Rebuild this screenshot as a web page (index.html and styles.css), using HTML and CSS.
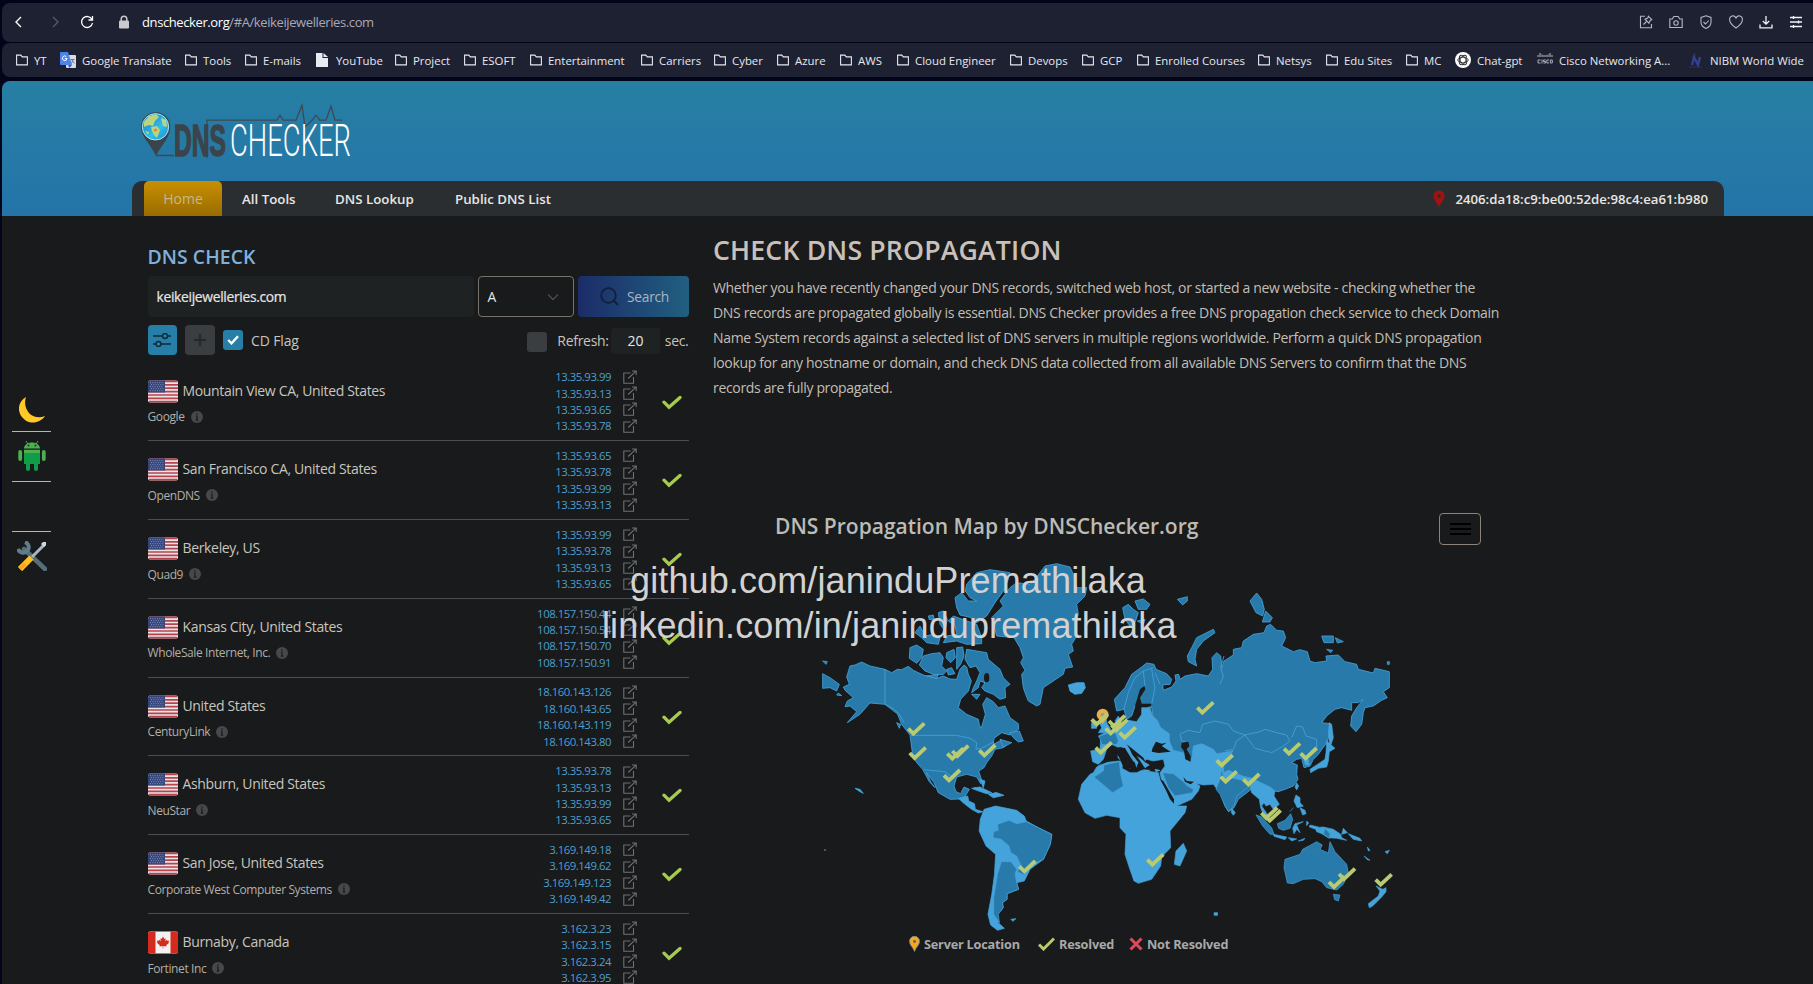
FILE: index.html
```html
<!DOCTYPE html>
<html lang="en">
<head>
<meta charset="utf-8">
<title>DNS Checker</title>
<link rel="stylesheet" href="styles.css">
</head>
<body>
<svg class="defs" width="0" height="0" aria-hidden="true">
  <defs>
    <linearGradient id="sky" x1="0" y1="0" x2="1" y2="1"><stop offset="0" stop-color="#1674b8"/><stop offset=".6" stop-color="#2ec0ee"/><stop offset="1" stop-color="#1b86c9"/></linearGradient>
    <symbol id="folder" viewBox="0 0 12 12"><path d="M.6 10.9V1.1h4.2l1.5 1.8h5.1v8z" fill="none" stroke="#e6e8ef" stroke-width="1.1"/></symbol>
    <symbol id="us" viewBox="0 0 30 22">
      <rect width="30" height="22" rx="2" fill="#e9e4e6"/>
      <path d="M1 .9h28M0 4.3h30M0 7.7h30M0 11.1h30M0 14.5h30M0 17.9h30M1 21.2h28" stroke="#b8434f" stroke-width="1.7"/>
      <path d="M0 2a2 2 0 0 1 2-2h15v12H0z" fill="#33457a"/>
      <path d="M2 2.2h14M3 4.2h13M2 6.2h14M3 8.2h13M2 10.2h14" stroke="#8f9cc2" stroke-width=".9" stroke-dasharray="1 1.3"/>
    </symbol>
    <symbol id="ca" viewBox="0 0 30 22">
      <rect width="30" height="22" rx="2" fill="#f2f2f2"/>
      <path d="M2 0h5.5v22H2a2 2 0 0 1-2-2V2a2 2 0 0 1 2-2z" fill="#d52b1e"/>
      <path d="M22.500 0H28a2 2 0 0 1 2 2v18a2 2 0 0 1-2 2h-5.500z" fill="#d52b1e"/>
      <path d="M15 5l1.400 2.400 1.300-.6-.5 3 1.700-1.500.4 1 1.800-.3-.7 1.800.8.500-3 2.500.3 1.200-3.200-.4v2.400h-.600v-2.400l-3.200.4.300-1.200-3-2.500.8-.5-.7-1.800 1.800.3.400-1 1.700 1.500-.5-3 1.300.6z" fill="#d52b1e"/>
    </symbol>
    <symbol id="info" viewBox="0 0 12 12"><circle cx="6" cy="6" r="6" fill="#45494b"/><path d="M6 2.200v1.500M6 4.800v4.400M4.900 5h1.100M4.800 9.200h2.400" stroke="#191b1c" stroke-width="1.200"/></symbol>
    <symbol id="ext" viewBox="0 0 14 14"><path d="M7.500 3H.8v10.300h9.700V7M9 1h4.200v4M13 1.200L5.200 8.500" fill="none" stroke="#6d7072" stroke-width="1.100"/></symbol>
    <symbol id="tick" viewBox="0 0 20 15"><path d="M2 7.200l5 5L18 2.400" fill="none" stroke="#a8cb4f" stroke-width="3.300" stroke-linecap="round"/></symbol>
    <g id="m"><path d="M-23 0L-8 15L25-16" fill="none" stroke="#b8ca72" stroke-width="11.500"/></g>
  </defs>
</svg>

<div class="toolbar">
  <div class="tb-left">
    <svg width="12" height="14" viewBox="0 0 12 14"><path d="M8 2L3 7l5 5" fill="none" stroke="#fff" stroke-width="1.400"/></svg>
    <svg class="fwd" width="12" height="14" viewBox="0 0 12 14"><path d="M4 2l5 5-5 5" fill="none" stroke="#555a6c" stroke-width="1.300"/></svg>
    <svg width="14" height="14" viewBox="0 0 14 14"><path d="M12 4.500A5.500 5.500 0 1 0 12.500 8M12.500 1v4H8.500" fill="none" stroke="#fff" stroke-width="1.300"/></svg>
    <svg class="lock" width="12" height="14" viewBox="0 0 12 14"><path d="M3.200 6V4a2.800 2.800 0 0 1 5.600 0v2" fill="none" stroke="#c8cad0" stroke-width="1.500"/><rect x="1" y="5.500" width="10" height="8" rx="1.200" fill="#c8cad0"/></svg>
    <div class="url"><b>dnschecker.org</b>/#A/keikeijewelleries.com</div>
  </div>
  <div class="tb-right">
    <svg viewBox="0 0 14 14"><path d="M6 1.200H1.500v11.500h11V9M12.800 4.600L9.400 1.200 8.800 3 6 4.200l4 4 1.200-2.800zM8 6L4.500 9.500"/></svg>
    <svg viewBox="0 0 14 14"><path d="M.8 4h2.500L4.800 1.500h4.400L10.700 4h2.500v8.500H.8z"/><circle cx="7" cy="8" r="2.200"/></svg>
    <svg viewBox="0 0 14 14"><path d="M7 .8l5 1.600v4.800c0 3-2.200 5-5 6.200-2.800-1.200-5-3.200-5-6.200V2.400zM4.500 7l2 2 3.200-3.500"/></svg>
    <svg viewBox="0 0 14 14"><path d="M7 13C3.500 10.500.7 8 .7 4.900A3.300 3.300 0 0 1 7 3a3.300 3.300 0 0 1 6.300 1.900C13.300 8 10.500 10.500 7 13z"/></svg>
    <svg class="bright" viewBox="0 0 14 14"><path d="M7 1v8M3.800 6L7 9.200 10.200 6M1 9.500v3.300h12V9.500"/></svg>
    <svg class="bright" viewBox="0 0 14 14"><path d="M1 2.500h12M1 7h12M1 11.500h12M4.500 1v3M9.500 5.500v3M4.500 10v3"/></svg>
  </div>
</div>

<div class="bookmarks">
  <span><svg><use href="#folder"/></svg>YT</span>
  <span><svg class="i16" viewBox="0 0 16 16"><rect x="6" y="3" width="10" height="13" rx="1" fill="#d9dde6"/><path d="M0 1a1 1 0 0 1 1-1h7l4 13H1a1 1 0 0 1-1-1z" fill="#4c84ea"/><path d="M8 13l1.500 3L12 13z" fill="#2f5fc4"/><path d="M4.800 6.500H7A2.300 2.300 0 1 1 6.200 4.500" stroke="#fff" fill="none"/><path d="M10.500 7.500h4M13.300 7.500l-2 4M12 8.500l2.500 3" stroke="#6a7488" fill="none"/></svg>Google Translate</span>
  <span><svg><use href="#folder"/></svg>Tools</span>
  <span><svg><use href="#folder"/></svg>E-mails</span>
  <span class="yt"><svg class="page" viewBox="0 0 12 14"><path d="M0 0h6.500v5H12v9H0zM7.500 0L12 4H7.500z" fill="#e8ebf2"/></svg>YouTube</span>
  <span><svg><use href="#folder"/></svg>Project</span>
  <span><svg><use href="#folder"/></svg>ESOFT</span>
  <span><svg><use href="#folder"/></svg>Entertainment</span>
  <span><svg><use href="#folder"/></svg>Carriers</span>
  <span><svg><use href="#folder"/></svg>Cyber</span>
  <span><svg><use href="#folder"/></svg>Azure</span>
  <span><svg><use href="#folder"/></svg>AWS</span>
  <span><svg><use href="#folder"/></svg>Cloud Engineer</span>
  <span><svg><use href="#folder"/></svg>Devops</span>
  <span><svg><use href="#folder"/></svg>GCP</span>
  <span><svg><use href="#folder"/></svg>Enrolled Courses</span>
  <span><svg><use href="#folder"/></svg>Netsys</span>
  <span><svg><use href="#folder"/></svg>Edu Sites</span>
  <span><svg><use href="#folder"/></svg>MC</span>
  <span><svg class="i16" viewBox="0 0 16 16"><circle cx="8" cy="8" r="8" fill="#fff"/><g fill="none" stroke="#333" stroke-width=".9"><ellipse cx="8" cy="8" rx="5.200" ry="2.800"/><ellipse cx="8" cy="8" rx="5.200" ry="2.800" transform="rotate(60 8 8)"/><ellipse cx="8" cy="8" rx="5.200" ry="2.800" transform="rotate(120 8 8)"/></g></svg>Chat-gpt</span>
  <span><svg class="i16" viewBox="0 0 16 16"><path d="M1 3v2M3 1v4M5 2.500v2.500M7 3v2M9 3v2M11 2.500v2.500M13 1v4M15 3v2" stroke="#c9ccd6" stroke-width=".9"/><path d="M3.500 8H1v3h2.500M5 7.500v4M8.500 8H6.500v1.500h2V11h-2M12 8H9.800v3H12M13.300 8h2v3h-2z" stroke="#c9ccd6" stroke-width=".8" fill="none"/></svg>Cisco Networking A...</span>
  <span><svg class="i16" viewBox="0 0 16 16"><path d="M4 13L6 5l4 8 2-8" fill="none" stroke="#33408f" stroke-width="2.400"/><path d="M1 15h13M5 3h3M6.500 1v3" stroke="#2b3260"/></svg>NIBM World Wide</span>
</div>

<div class="site">
  <header class="head">
    <svg class="logo" width="222" height="81" viewBox="134 90 222 81">
      <path d="M156 156C152 146 141 137 141 127a14.700 14.700 0 0 1 29.400 0c0 10-9 18-14.400 29z" fill="#3b444b"/>
      <circle cx="155.500" cy="126.800" r="13.200" fill="url(#sky)" stroke="#bfeefb" stroke-width=".9"/>
      <path d="M144 122l5-6 7-2 3 3-4 4-2 5-4-1-5 2zM151 127l6-1 3 4-3 8-3-3-2-4zM161 118l5 2 1 7-4-1zM145 131l4 1-1 3z" fill="#b9d57f"/>
      <circle cx="155.500" cy="130" r="1.600" fill="#e8823a"/>
      <path d="M156 155.500h18M207 158V120.200h70l3-5 3 5h13l6-15 3 22 8-8 3-4 4 5h6l5-14 4 14h7" fill="none" stroke="#3c4a53" stroke-width="1.300"/>
      <text class="logo-dns" x="174" y="155.500" textLength="52" lengthAdjust="spacingAndGlyphs">DNS</text>
      <text class="logo-chk" x="230" y="156" textLength="121" lengthAdjust="spacingAndGlyphs">CHECKER</text>
    </svg>
    <nav class="nav">
      <a class="on">Home</a><a class="n1">All Tools</a><a class="n2">DNS Lookup</a><a class="n3">Public DNS List</a>
      <div class="ip"><svg width="12" height="18" viewBox="0 0 12 18"><path d="M6 17C4 12.500.5 10 .5 6a5.500 5.500 0 0 1 11 0C11.500 10 8 12.500 6 17z" fill="#a31212"/><circle cx="6" cy="6" r="1.800" fill="#2b2e30"/></svg>2406:da18:c9:be00:52de:98c4:ea61:b980</div>
    </nav>
  </header>

  <main class="main">
    <aside class="rail">
      <div class="r-item moon"><svg width="26" height="26" viewBox="0 0 26 26"><path d="M7 0C-2 5-2.500 17 6 23c7 5 16 2 20-4C18 22 11 19 8 13 6 9 5.500 5 7 0z" fill="#ffca28"/></svg></div>
      <div class="r-item droid"><svg width="28" height="31" viewBox="0 0 28 31"><path d="M6 8.500c.5-8 15.500-8 16 0zM6 9.800h16V14H6z" fill="#4caf50"/><path d="M6 13h16v11H6z" fill="#0f9d4a"/><path d="M8 1l2 3M20 1l-2 3" stroke="#4caf50"/><path d="M10 22v7M18 22v7" stroke="#0f9d4a" stroke-width="4" stroke-linecap="round"/><path d="M2.200 12v7M25.800 12v7" stroke="#4caf50" stroke-width="3.800" stroke-linecap="round"/><circle cx="10.500" cy="5.500" r="1" fill="#17351c"/><circle cx="17.500" cy="5.500" r="1" fill="#17351c"/></svg></div>
      <div class="r-item blank"></div>
      <div class="r-item tools"><svg width="30" height="30" viewBox="0 0 30 30"><path d="M7 8l21 20" stroke="#546e7a" stroke-width="4.500" stroke-linecap="round"/><path d="M8 1a5.500 5.500 0 1 1-7 7" fill="none" stroke="#607d8b" stroke-width="4"/><path d="M28 3L15 16" stroke="#a9b7bd" stroke-width="3"/><path d="M26 1l3 0 0 3-2 2-3-3z" fill="#cfd8dc"/><path d="M14.500 16.500L3 28" stroke="#ffc020" stroke-width="6"/><path d="M8 23l-5 5" stroke="#ff9d1c" stroke-width="3"/></svg></div>
    </aside>

    <section class="check">
      <h2>DNS CHECK</h2>
      <div class="form">
        <div class="field">keikeijewelleries.com</div>
        <div class="select">A<svg width="12" height="8" viewBox="0 0 12 8"><path d="M1 1.500l5 5 5-5" fill="none" stroke="#4b4e50" stroke-width="1.300"/></svg></div>
        <div class="btn"><svg width="19" height="19" viewBox="0 0 19 19"><circle cx="8.500" cy="8.500" r="7.300" fill="none" stroke="#10203c" stroke-width="1.700"/><path d="M13.500 13.500l4.500 4.500" stroke="#10203c" stroke-width="2"/></svg>Search</div>
      </div>
      <div class="opts">
        <span class="sq blue"><svg width="18" height="14" viewBox="0 0 18 14"><path d="M0 3h9.500M14.500 3H18M0 11h3M8 11h10" stroke="#0e2a38" stroke-width="1.400"/><circle cx="12" cy="3" r="2.500" fill="none" stroke="#0e2a38" stroke-width="1.400"/><circle cx="5.500" cy="11" r="2.500" fill="none" stroke="#0e2a38" stroke-width="1.400"/></svg></span>
        <span class="sq grey"><svg width="14" height="14" viewBox="0 0 14 14"><path d="M7 1v12M1 7h12" stroke="#26292a" stroke-width="2.200"/></svg></span>
        <span class="cb on"><svg width="12" height="10" viewBox="0 0 12 10"><path d="M1.200 5l3.300 3.300L11 1.200" fill="none" stroke="#fff" stroke-width="2.400"/></svg></span>
        <span class="cd">CD Flag</span>
        <span class="cb off"></span>
        <span class="rf">Refresh:</span>
        <span class="num">20</span>
        <span class="sec">sec.</span>
      </div>

      <div class="row"><div class="who"><div class="place"><svg class="flag"><use href="#us"/></svg>Mountain View CA, United States</div><div class="isp">Google<svg><use href="#info"/></svg></div></div>
        <ul><li>13.35.93.99<svg><use href="#ext"/></svg></li><li>13.35.93.13<svg><use href="#ext"/></svg></li><li>13.35.93.65<svg><use href="#ext"/></svg></li><li>13.35.93.78<svg><use href="#ext"/></svg></li></ul><svg class="ok"><use href="#tick"/></svg></div>
      <div class="row"><div class="who"><div class="place"><svg class="flag"><use href="#us"/></svg>San Francisco CA, United States</div><div class="isp">OpenDNS<svg><use href="#info"/></svg></div></div>
        <ul><li>13.35.93.65<svg><use href="#ext"/></svg></li><li>13.35.93.78<svg><use href="#ext"/></svg></li><li>13.35.93.99<svg><use href="#ext"/></svg></li><li>13.35.93.13<svg><use href="#ext"/></svg></li></ul><svg class="ok"><use href="#tick"/></svg></div>
      <div class="row"><div class="who"><div class="place"><svg class="flag"><use href="#us"/></svg>Berkeley, US</div><div class="isp">Quad9<svg><use href="#info"/></svg></div></div>
        <ul><li>13.35.93.99<svg><use href="#ext"/></svg></li><li>13.35.93.78<svg><use href="#ext"/></svg></li><li>13.35.93.13<svg><use href="#ext"/></svg></li><li>13.35.93.65<svg><use href="#ext"/></svg></li></ul><svg class="ok"><use href="#tick"/></svg></div>
      <div class="row"><div class="who"><div class="place"><svg class="flag"><use href="#us"/></svg>Kansas City, United States</div><div class="isp">WholeSale Internet, Inc.<svg><use href="#info"/></svg></div></div>
        <ul><li>108.157.150.44<svg><use href="#ext"/></svg></li><li>108.157.150.54<svg><use href="#ext"/></svg></li><li>108.157.150.70<svg><use href="#ext"/></svg></li><li>108.157.150.91<svg><use href="#ext"/></svg></li></ul><svg class="ok"><use href="#tick"/></svg></div>
      <div class="row"><div class="who"><div class="place"><svg class="flag"><use href="#us"/></svg>United States</div><div class="isp">CenturyLink<svg><use href="#info"/></svg></div></div>
        <ul><li>18.160.143.126<svg><use href="#ext"/></svg></li><li>18.160.143.65<svg><use href="#ext"/></svg></li><li>18.160.143.119<svg><use href="#ext"/></svg></li><li>18.160.143.80<svg><use href="#ext"/></svg></li></ul><svg class="ok"><use href="#tick"/></svg></div>
      <div class="row"><div class="who"><div class="place"><svg class="flag"><use href="#us"/></svg>Ashburn, United States</div><div class="isp">NeuStar<svg><use href="#info"/></svg></div></div>
        <ul><li>13.35.93.78<svg><use href="#ext"/></svg></li><li>13.35.93.13<svg><use href="#ext"/></svg></li><li>13.35.93.99<svg><use href="#ext"/></svg></li><li>13.35.93.65<svg><use href="#ext"/></svg></li></ul><svg class="ok"><use href="#tick"/></svg></div>
      <div class="row"><div class="who"><div class="place"><svg class="flag"><use href="#us"/></svg>San Jose, United States</div><div class="isp">Corporate West Computer Systems<svg><use href="#info"/></svg></div></div>
        <ul><li>3.169.149.18<svg><use href="#ext"/></svg></li><li>3.169.149.62<svg><use href="#ext"/></svg></li><li>3.169.149.123<svg><use href="#ext"/></svg></li><li>3.169.149.42<svg><use href="#ext"/></svg></li></ul><svg class="ok"><use href="#tick"/></svg></div>
      <div class="row"><div class="who"><div class="place"><svg class="flag"><use href="#ca"/></svg>Burnaby, Canada</div><div class="isp">Fortinet Inc<svg><use href="#info"/></svg></div></div>
        <ul><li>3.162.3.23<svg><use href="#ext"/></svg></li><li>3.162.3.15<svg><use href="#ext"/></svg></li><li>3.162.3.24<svg><use href="#ext"/></svg></li><li>3.162.3.95<svg><use href="#ext"/></svg></li></ul><svg class="ok"><use href="#tick"/></svg></div>
    </section>

    <section class="info">
      <h1>CHECK DNS PROPAGATION</h1>
      <p>Whether you have recently changed your DNS records, switched web host, or started a new website - checking whether the<br>DNS records are propagated globally is essential. DNS Checker provides a free DNS propagation check service to check Domain<br>Name System records against a selected list of DNS servers in multiple regions worldwide. Perform a quick DNS propagation<br>lookup for any hostname or domain, and check DNS data collected from all available DNS Servers to confirm that the DNS<br>records are fully propagated.</p>
      <div class="map-head">
        <h3>DNS Propagation Map by DNSChecker.org</h3>
        <div class="menu"><i></i><i></i><i></i></div>
      </div>
      <svg class="map" width="590" height="384" viewBox="815 550 590 384">
        <g class="mid" transform="translate(810 540) scale(.33333)">
          <path d="M120 375L135 372 155 363 180 375 225 385 245 395 262 385 275 386 295 376 310 388 340 402 380 412 400 405 420 414 440 415 450 385 462 372 470 378 475 400 484 420 475 450 452 475 445 500 470 520 505 535 508 552 514 562 520 540 526 520 518 490 530 470 550 482 565 500 585 495 600 530 625 548 626 565 600 582 575 575 552 592 550 610 575 597 590 612 580 620 555 625 545 645 530 665 522 680 506 690 514 715 512 728 500 708 470 700 440 708 432 735 438 752 452 758 462 738 478 745 466 765 450 774 420 775 385 755 372 725 350 695 362 722 375 740 358 722 338 685 320 665 308 640 303 605 300 582 275 550 262 518 248 508 225 490 180 486 150 520 112 545 140 512 120 495 105 497 112 480 130 470 105 448 100 438 118 430 110 408z"/>
          <path d="M225 385V490L250 503 268 520 282 545M303 583H440L480 592 500 605 498 625 515 622 550 603M342 686L405 692 425 708" fill="none"/>
          <path d="M680 108L705 75 740 68 780 78 790 100 795 125 800 140 830 140 825 165 800 190 805 220 795 250 797 290 785 310 790 330 775 340 788 378 765 382 760 400 730 420 700 440 690 490 680 495 655 480 645 455 640 440 635 400 645 388 632 365 640 350 630 320 612 290 560 285 545 230 580 195 570 180 600 140 620 125 660 130z"/>
          <path d="M470 130L500 95 540 86 600 95 595 115 580 150 555 185 530 225 500 245 485 230 450 222 440 200 435 170 455 155 475 180 500 180 480 170 466 150z"/>
          <path d="M430 225L465 238 500 250 515 290 515 308 470 310 440 300 400 305 410 285 440 280 435 255 415 240zM315 275L330 255 345 285 370 280 390 290 385 310 350 305 335 290zM385 215L400 210 412 235 405 270 390 250zM355 225L370 222 372 234 358 236zM300 320L320 312 340 325 335 350 320 367 298 352zM340 345L365 338 390 335 400 350 395 375 410 390 400 400 375 402 345 390 328 372zM410 335L432 325 436 350 422 365 408 350zM440 320L458 318 462 345 452 370 440 385zM470 325L500 330 530 335 535 355 570 385 580 410 600 430 585 440 587 470 570 475 550 460 525 450 515 440 525 425 510 420 505 440 485 455 490 440 500 420 510 395 498 375 480 380 465 355zM485 460L510 460 500 475zM350 405L385 400 380 412zM410 385L425 380 435 398 415 402z"/>
          <path d="M600 575L628 570 640 600 625 603 610 590zM570 595L605 605 580 618zM38 398L60 410 88 430 80 450 60 440 38 442zM38 360L52 362 48 370zM85 456L95 464 80 462zM260 545L272 550 268 562z"/>
          <path class="lt" d="M775 432L800 425 822 425 826 440 815 457 795 460 780 450zM135 742L150 745 160 757 150 752zM485 742L510 738 545 755 530 758 500 748zM535 760L560 755 582 763 550 770zM510 715L525 720 520 740z"/>
          <ellipse cx="530" cy="410" rx="8" ry="14" fill="#181a1b"/>
        </g>
        <g class="mid" transform="translate(1100 540) scale(.33333)">
          <path d="M43 475L75 440 95 400 125 378 140 366 162 370 168 385 200 398 215 415 210 430 188 432 190 448 215 438 228 420 225 402 236 400 240 415 255 405 290 398 325 405 338 385 336 350 350 335 362 345 366 380 372 360 400 342 400 325 425 320 430 300 460 280 492 275 500 255 512 250 530 268 550 270 557 290 545 315 580 332 600 326 622 332 630 360 645 365 680 360 678 345 715 342 735 362 770 370 775 385 820 396 825 382 868 392 868 440 850 452 862 470 845 478 820 495 795 500 790 515 785 550 768 572 752 555 755 525 770 500 790 475 775 485 755 485 755 508 725 500 705 505 680 525 665 545 690 548 690 575 680 605 655 640 640 655 630 675 612 680 605 652 590 655 575 665 592 672 590 700 594 715 580 735 555 745 535 752 500 745 460 740 415 775 402 800 386 812 375 795 362 755 350 725 300 700 245 650 200 620 205 590 180 560 160 530 155 500 125 495 105 495 95 525 80 535 72 505 50 510z"/>
          <path d="M72 505L85 455 105 410 130 390 160 380M130 390L135 435M155 385L165 440 155 490M165 395L180 430M240 580L265 568 300 575 308 550 345 540 385 550 400 570 435 582 410 600 400 625 375 630M240 580L245 600 262 605 260 630M435 582L480 572 495 565 530 575 560 582 570 600 550 615 515 635 465 622 435 582M575 590L590 555 608 558 618 585 650 595 650 620M372 345L362 380 370 405 360 430" fill="none"/>
          <path class="sea" d="M133 435L120 445 105 495 118 520 130 500 152 496 155 488 125 488 120 470 136 445z"/>
          <path d="M262 345L275 320 290 290 340 265 345 275 310 300 290 325 285 355 290 375 265 362zM450 180L470 156 485 175 493 205 488 225 468 215zM497 210L517 230 510 243 487 243zM665 285L700 285 700 305 672 305zM706 290L730 302 712 306zM680 325L698 328 692 335zM232 175L262 167 262 180 248 192zM68 200L85 190 100 205 115 215 105 245 90 255 75 235zM105 180L130 174 150 190 140 205 115 205zM112 240L135 235 130 250zM862 362h6v8h-6z"/>
        </g>
        <g class="lt" transform="translate(1070 690) scale(.33333)">
          <path d="M240 50L248 75 262 88 272 110 298 128 298 150 310 178 340 185 365 205 370 165 395 158 430 175 440 188 490 180 470 200 462 220 460 245 475 238 520 256 545 262 600 288 615 300 612 315 628 340 610 355 600 340 588 345 582 335 575 345 592 370 582 375 572 350 568 325 545 305 540 285 505 270 480 262 460 262 445 300 430 280 400 282 370 275 345 255 390 285 385 300 365 325 318 346 300 320 275 270 270 245 285 225 280 205 250 210 230 205 222 212 238 222 225 230 205 200 185 175 175 165 185 190 205 215 195 218 165 170 150 172 125 160 110 175 100 205 85 220 68 212 62 180 90 175 92 145 85 135 105 125 120 118 145 115 155 95 175 88 200 92 215 70 215 50z"/>
          <path d="M65 95L80 90 80 112 64 112zM88 95L92 75 108 72 110 95 122 115 110 125 85 125 95 110zM135 90L145 75 155 95zM190 215L203 216 198 230 188 225zM165 210L190 222 180 232zM145 180L155 185 152 208 144 200zM220 236L240 238 225 243zM255 235L270 238 258 243zM0 0L35 0 15 8z"/>
          <path d="M80 228L100 215 148 210 160 212 156 232 180 245 200 245 215 238 265 245 270 265 300 320 318 345 350 345 345 365 300 420 302 470 275 498 272 525 245 565 205 577 192 570 178 530 165 490 168 430 150 410 150 380 110 373 75 382 45 365 25 325 35 280 60 250 70 245z"/>
          <path d="M340 457L350 480 330 525 313 520 318 480zM485 352L496 365 490 373 484 365zM680 275L686 285 680 297 675 288zM678 312L690 320 690 335 700 345 682 350 672 330zM690 350L705 358 708 368 698 372zM670 350L660 362M735 410L760 408 790 415 812 430 815 440 830 448 800 442 775 440 755 428 740 422zM675 398L700 392 680 402 690 425 680 415 672 428 668 412zM720 402L745 408 735 414 718 408zM710 390L716 396 710 404zM610 430L650 438 645 446 612 436zM655 440L680 444 665 450zM685 450L705 442 700 448zM835 428L870 442 875 450 850 445zM892 468L900 478 895 480zM882 495L900 508 892 506zM945 482L958 478 952 488zM820 412L832 425 815 430z"/>
          <path d="M700 200L715 205 718 222 706 222zM778 95L785 100 790 140 780 170 775 130zM770 150L795 172 778 182 775 210 770 228 745 232 722 245 720 235 750 215 765 205 768 185zM918 585L938 595 948 590 948 602 935 618 908 645 898 650 895 638 925 615 930 600z"/>
          <g class="mid">
            <path d="M88 135L110 128 125 118 138 130 145 150 140 160 115 162 95 160zM72 258L100 240 102 222 148 212 152 250 160 285 128 305zM278 245L310 248 340 272 352 285 370 295 368 305 315 315 295 290zM455 235L462 262 490 262 520 268 540 285 525 295 500 315 492 345 475 362 465 345 450 310 438 295 448 270zM558 372L575 378 605 410 612 430 600 430 578 405zM622 398L645 388 662 368 668 385 660 412 640 418 626 412zM765 412L780 428 778 442 760 430z"/>
            <path d="M645 505L690 490 698 475 722 462 740 452 757 462 750 475 775 486 780 452 795 482 830 520 835 545 820 580 800 597 770 590 755 572 735 563 700 565 670 578 652 576 642 530zM790 610L810 612 805 630 794 626z"/>
          </g>
          <path class="sea" d="M248 170L258 152 275 158 290 155 275 165 302 182 265 186 245 182zM335 155L355 152 358 165 350 175 362 195 362 212 346 205 342 180 333 168zM340 258L350 270 372 272 362 280 345 272zM270 264L280 270 312 325 312 338 300 325 288 298z"/>
          <path class="sea" d="M170 160L185 172 220 200 228 215 210 200 190 190zM150 168L165 172 175 200 195 215 200 235 160 228 150 205 140 185 130 205 90 222 108 205 128 175z"/>
        </g>
        <g class="lt" transform="translate(810 740) scale(.38267 .33333)">
          <path d="M455 205L485 195 540 208 560 225 565 240 600 262 632 280 628 310 610 355 575 385 560 420 540 425 545 445 515 458 515 475 503 485 505 500 490 520 492 545 508 562 490 568 472 552 465 520 475 460 482 400 485 340 460 315 442 270 445 235zM388 172L412 165 415 180 430 188 432 205 452 212 440 216 422 205 400 185zM430 140L455 148 470 155 450 150zM472 160L485 155 500 162 480 166zM525 535L538 533 530 541zM1056 515h9v8h-9zM532 638h9v4h-9z"/>
          <path class="mid" d="M490 250L520 238 540 248 565 242 600 262 632 280 628 310 610 355 580 370 560 402 542 392 552 375 540 345 525 335 520 315 500 295 478 290 480 272 492 268zM500 362L525 362 540 385 536 400 540 425 545 445 515 458 515 475 503 485 505 500 492 520 495 545 480 520 480 470 490 400z"/>
          <path d="M495 360L487 400 477 480 474 530 490 550" fill="none"/>
        </g>
        <path d="M824 849h2" stroke="#4aa0d5"/>
        <g transform="translate(1070 690) scale(.33333)">
          <path d="M98 100C92 86 80 82 80 71a18 18 0 0 1 36 0c0 11-12 15-18 29z" fill="#e9b04a"/><circle cx="98" cy="71" r="6" fill="#8b9fa0"/>
          <use href="#m" x="405" y="50"/><use href="#m" x="88" y="85"/><use href="#m" x="140" y="90"/><use href="#m" x="130" y="112"/><use href="#m" x="147" y="102"/><use href="#m" x="172" y="125"/><use href="#m" x="100" y="170"/><use href="#m" x="665" y="173"/><use href="#m" x="715" y="187"/><use href="#m" x="463" y="208"/><use href="#m" x="475" y="257"/><use href="#m" x="543" y="265"/><use href="#m" x="597" y="366"/><use href="#m" x="607" y="374"/><use href="#m" x="255" y="506"/><use href="#m" x="830" y="549"/><use href="#m" x="800" y="573"/><use href="#m" x="940" y="566"/>
          <use href="#m" x="-129" y="526"/>
          <use href="#m" x="-462" y="113"/><use href="#m" x="-458" y="186"/><use href="#m" x="-345" y="188"/><use href="#m" x="-330" y="180"/><use href="#m" x="-249" y="178"/><use href="#m" x="-355" y="253"/>
        </g>
      </svg>
      <div class="legend">
        <svg width="11" height="16" viewBox="0 0 11 16"><path d="M5.500 15.500C4 11 .5 9 .5 5.300a5 5 0 0 1 10 0C10.500 9 7 11 5.500 15.500z" fill="#f5a623" stroke="#6f8f9c" stroke-width=".8"/><circle cx="5.500" cy="5.500" r="1.400" fill="#735c2c"/></svg><span class="l1">Server Location</span>
        <svg width="17" height="14" viewBox="0 0 17 14"><path d="M1 7.500l4.500 4.500L16 1.500" fill="none" stroke="#b4cc6a" stroke-width="3"/></svg><span class="l2">Resolved</span>
        <svg width="14" height="14" viewBox="0 0 14 14"><path d="M1.500 1.500l11 11M12.500 1.500l-11 11" stroke="#dc4a5c" stroke-width="3"/></svg><span class="l3">Not Resolved</span>
      </div>
    </section>
  </main>
</div>
<div class="mark"><span class="w1">github.com/janinduPremathilaka</span><span class="w2">linkedin.com/in/janindupremathilaka</span></div>
</body>
</html>
```
FILE: styles.css
```css
* { box-sizing: border-box; }
body { margin: 0; padding: 3px 0 0 2px; width: 1813px; height: 984px; overflow: hidden; background: #02051a; color: #c9c5be; font-family: "Open Sans", "Noto Sans", sans-serif; position: relative; }
h1, h2, h3, p, ul { margin: 0; padding: 0; font-weight: 400; }
.defs { display: block; position: absolute; }

.toolbar { height: 39px; background: #1e2132; border-radius: 8px 0 0 8px; display: flex; justify-content: space-between; align-items: center; padding: 0 10px 1px 11px; }
.tb-left { display: flex; align-items: center; }
.tb-left svg { margin-right: 24px; }
.tb-left .fwd { margin-right: 19px; }
.tb-left .lock { margin: 0 12px 0 0; }
.url { font-size: 13px; letter-spacing: -.4px; color: #a6a9b6; white-space: nowrap; }
.url b { font-weight: 400; color: #fff; }
.tb-right { display: flex; gap: 16px; }
.tb-right svg { width: 14px; height: 14px; fill: none; stroke: #b4b7c2; stroke-width: 1.1; }
.tb-right .bright { stroke: #f0f1f5; stroke-width: 1.3; }

.bookmarks { margin-top: 1px; height: 34px; background: #1e2132; border-radius: 8px 0 0 8px; padding-left: 14px; display: grid; align-items: center; white-space: nowrap; font-size: 11.4px; color: #e6e8ef;
  grid-template-columns: 44px 125px 60px 71px 79px 69px 66px 111px 73px 63px 63px 57px 113px 72px 55px 121px 68px 80px 49px 82px 151px 125px; }
.bookmarks span { display: flex; align-items: center; gap: 6px; }
.bookmarks svg { width: 12px; height: 12px; flex: none; }
.bookmarks .i16 { width: 16px; height: 16px; }
.bookmarks .yt { gap: 8px; }
.bookmarks .page { height: 14px; }

.site { margin-top: 4px; height: 903px; background: #181a1b; border-radius: 8px 0 0 0; overflow: hidden; }
.head { height: 135px; background: linear-gradient(#277fa3, #2474a9); display: flex; flex-direction: column; justify-content: space-between; padding: 9px 89px 0 130px; }
.logo { margin-left: 2px; flex: none; }
.logo-dns { font: 700 44px "Liberation Sans", sans-serif; fill: #3b444b; stroke: #3b444b; stroke-width: 1.6px; }
.logo-chk { font: 300 45px Roboto, sans-serif; fill: #fff; }
.nav { height: 35px; background: #2b2e30; border-radius: 10px 10px 0 0; display: flex; align-items: center; padding: 0 16px 0 12px; font-size: 13.3px; font-weight: 600; color: #e8e6e3; white-space: nowrap; }
.nav a { display: block; }
.nav .on { width: 78px; height: 35px; line-height: 35px; text-align: center; border-radius: 5px 5px 0 0; background: linear-gradient(#c88f00, #986c00); color: #c5b78f; font-weight: 400; font-size: 14px; }
.nav .n1 { margin-left: 20px; width: 93px; }
.nav .n2 { width: 120px; }
.ip { margin-left: auto; display: flex; align-items: center; gap: 10px; font-size: 13.2px; }

.main { display: flex; height: 768px; }
.rail { width: 50px; margin: 171px 96px 0 0; padding-left: 10px; }
.r-item { width: 39px; height: 50px; border-bottom: 1px solid #b9b4ac; display: flex; align-items: center; padding-left: 6px; }
.r-item.moon { height: 45px; padding: 1px 0 0 7px; }
.r-item.droid { padding-bottom: 2px; }
.r-item.tools { border: 0; padding: 0 0 2px 5px; }

.check { width: 541px; flex: none; margin-left: -.5px; }
.check h2 { font-size: 19.4px; font-weight: 600; color: #7fb0dc; line-height: 26px; margin-top: 28px; letter-spacing: .05px; }
.form { display: flex; margin-top: 6px; height: 41px; font-size: 13.8px; letter-spacing: -.3px; }
.field { width: 326px; background: #1f2223; border-radius: 4px; line-height: 42px; padding-left: 9px; margin-right: 4px; color: #e8e6e3; -webkit-text-stroke: .2px #e8e6e3; }
.select { width: 96px; border: 1px solid #77726a; border-radius: 4px; display: flex; align-items: center; justify-content: space-between; padding: 0 14px 0 9px; color: #e8e6e3; }
.btn { margin-left: 4px; width: 111px; border-radius: 4px; background: linear-gradient(90deg, #1b2c68, #215f80); display: flex; align-items: center; justify-content: center; gap: 8px; color: #a9b4c0; padding-left: 3px; }
.opts { display: flex; align-items: center; height: 30px; margin: 8px 0 7.500px; font-size: 14px; letter-spacing: -.15px; }
.sq { width: 30px; height: 30px; border-radius: 4px; margin-right: 8px; display: flex; align-items: center; justify-content: center; }
.blue { background: #277fa8; }
.grey { background: #3a3e40; }
.cb { width: 20px; height: 20px; border-radius: 3px; display: flex; align-items: center; justify-content: center; background: #277fa8; }
.cd { width: 278px; margin-left: 8px; }
.cb.off { background: #3a3e40; margin: 3px 10px 0 0; }
.rf { width: 53px; letter-spacing: -.3px; }
.num { width: 49px; height: 26px; line-height: 26px; background: #1f2223; text-align: center; color: #e8e6e3; border-radius: 3px; margin-left: 1px; }
.sec { margin-left: 5px; letter-spacing: -.3px; }
.cd, .rf, .num, .sec { margin-top: 1px; }

.row { height: 78.8px; border-bottom: 1px solid #4a4e50; display: flex; padding-right: 6px; }
.who { width: 330px; padding-top: 16px; }
.place { display: flex; align-items: center; height: 23px; font-size: 14px; letter-spacing: -.34px; white-space: nowrap; }
.place .flag { width: 30px; height: 23px; margin-right: 5px; position: relative; top: 1px; }
.isp { display: flex; align-items: center; height: 18px; margin-top: 6px; font-size: 12px; letter-spacing: -.4px; color: #b3afa8; }
.isp svg { width: 12px; height: 12px; margin-left: 6px; }
.row ul { list-style: none; width: 159px; padding-top: 6px; font-size: 11.4px; letter-spacing: -.48px; color: #4d9fd0; }
.row li { height: 16.4px; display: flex; align-items: center; justify-content: flex-end; gap: 11.500px; }
.row li svg { width: 14px; height: 14px; }
.ok { width: 20px; height: 15px; margin: 32px 0 0 25px; }

.info { margin-left: 24.5px; width: 800px; flex: none; }
.info h1 { font-size: 26.7px; line-height: 36px; margin-top: 16px; color: #c9c1b9; font-weight: 600; letter-spacing: .15px; }
.info p { font-size: 14px; line-height: 25px; margin-top: 7px; white-space: nowrap; color: #c4beb6; letter-spacing: -.33px; }
.map-head { display: flex; margin: 113px 32px 0 62px; height: 34px; justify-content: space-between; }
.map-head h3 { font-size: 21px; line-height: 26px; font-weight: 600; color: #bdbbb5; }
.menu { width: 42px; height: 32px; border: 1px solid #8a8478; border-radius: 4px; display: flex; flex-direction: column; gap: 3px; align-items: center; justify-content: center; }
.menu i { width: 21px; height: 2px; background: #000; }
.map { display: block; margin: 4px 0 0 102px; }
.mid path, path.mid { fill: #277aa9; stroke: #45a3dc; stroke-width: 2.5; stroke-linejoin: round; }
.lt path { fill: #45a3dc; stroke: #45a3dc; stroke-width: 2; stroke-linejoin: round; }
.mid path.lt { fill: #45a3dc; }
.lt .mid path, .lt path.mid { fill: #277aa9; }
g path.sea { fill: #181a1b; stroke: none; }
.mid path[fill="none"], .lt path[fill="none"] { fill: none; }
.legend { display: flex; align-items: center; margin: 0 0 0 196px; height: 18px; font-size: 12.7px; font-weight: 700; color: #a9a9a9; white-space: nowrap; letter-spacing: -.2px; }
.legend span { margin-left: 4px; }
.l1 { width: 114px; }
.l2 { width: 70px; }

.mark { position: absolute; left: 602px; top: 557.5px; display: flex; flex-direction: column; font-family: "Liberation Sans", Arial, sans-serif; font-size: 36px; line-height: 45.5px; letter-spacing: .12px; color: #d2d2d2; white-space: nowrap; }
.w1 { margin-left: 28px; }
```
